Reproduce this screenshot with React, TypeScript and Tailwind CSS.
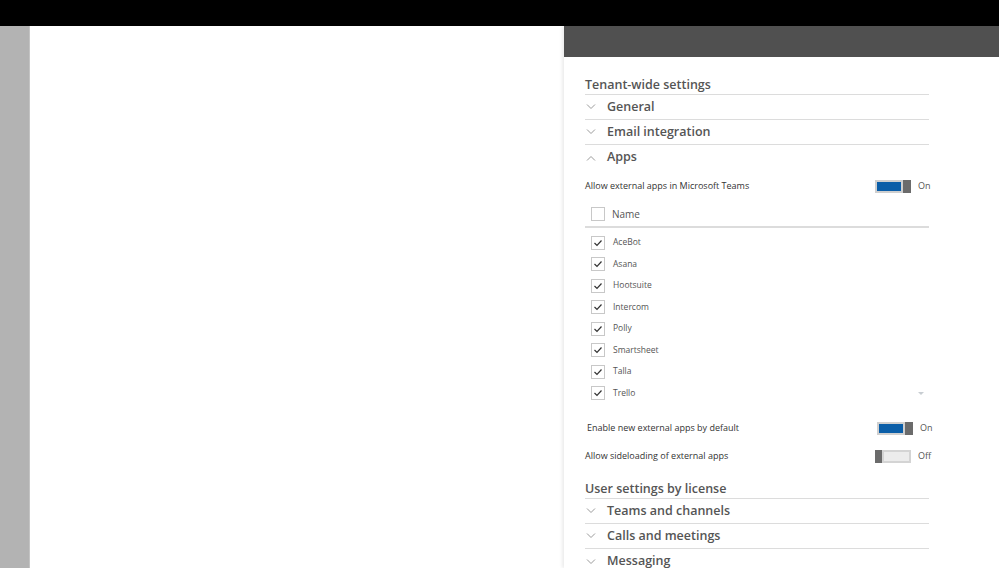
import React from "react";

const font = { fontFamily: '"Open Sans", "Noto Sans", sans-serif' };

function Chevron({ up = false }: { up?: boolean }) {
  return (
    <svg width="10" height="6" viewBox="0 0 10 6" className="shrink-0">
      <path
        d={up ? "M1 5.5 L5 1.5 L9 5.5" : "M1 0.5 L5 4.5 L9 0.5"}
        fill="none"
        stroke="#9a9a9a"
        strokeWidth="1"
      />
    </svg>
  );
}

function Section({ label, up = false, last = false }: { label: string; up?: boolean; last?: boolean }) {
  return (
    <div className={`flex items-center h-[25px] gap-[11px] pl-[1px] ${last ? "" : "border-b border-[#dcdcdc]"}`}>
      <Chevron up={up} />
      <span className="text-[12.5px] font-semibold text-[#555555] leading-none">{label}</span>
    </div>
  );
}

function Toggle({ on }: { on: boolean }) {
  if (on) {
    return (
      <div className="flex items-center gap-[7px]">
        <div className="flex items-center h-[13px]">
          <div className="w-[28px] h-[13px] border-2 border-[#cfcfcf] bg-[#0b5ea8]" />
          <div className="w-[8px] h-[13px] bg-[#6b6b6b]" />
        </div>
        <span className="text-[9px] text-[#555555] w-[11px]">On</span>
      </div>
    );
  }
  return (
    <div className="flex items-center gap-[7px]">
      <div className="flex items-center h-[13px]">
        <div className="w-[7px] h-[13px] bg-[#6b6b6b]" />
        <div className="w-[29px] h-[13px] border-2 border-[#d4d4d4] bg-[#ececec]" />
      </div>
      <span className="text-[9px] text-[#555555] w-[11px]">Off</span>
    </div>
  );
}

function Check({ checked }: { checked: boolean }) {
  return (
    <div className="w-[14px] h-[14px] border border-[#c8c8c8] bg-white flex items-center justify-center shrink-0">
      {checked && (
        <svg width="10" height="8" viewBox="0 0 10 8">
          <path d="M1.5 4 L4 6.5 L8.5 1.5" fill="none" stroke="#333333" strokeWidth="1.2" />
        </svg>
      )}
    </div>
  );
}

const apps = ["AceBot", "Asana", "Hootsuite", "Intercom", "Polly", "Smartsheet", "Talla", "Trello"];

export default function App() {
  return (
    <div className="w-[999px] h-[568px] overflow-hidden flex flex-col bg-white" style={font}>
      <div className="h-[26px] bg-black shrink-0" />
      <div className="flex flex-1 min-h-0">
        <div className="w-[30px] bg-[#b3b3b3] border-r border-[#c4c4c4]" />
        <div className="flex-1 bg-white" />
        <div className="w-[435px] flex flex-col shadow-[-2px_0_3px_rgba(0,0,0,0.08)]">
          <div className="h-[31px] bg-[#505050] shrink-0" />
          <div className="w-[344px] ml-[21px] pt-[20px]">
            <div className="h-[18px] flex items-center border-b border-[#dcdcdc]">
              <span className="text-[12.5px] font-semibold text-[#555555] leading-none">Tenant-wide settings</span>
            </div>
            <Section label="General" />
            <Section label="Email integration" />
            <Section label="Apps" up last />

            <div className="mt-[7px] h-[18px] flex items-center justify-between">
              <span className="text-[9px] text-[#333333]">Allow external apps in Microsoft Teams</span>
              <Toggle on />
            </div>

            <div className="mt-[12px] h-[21px] flex items-start gap-[7px] pl-[6px] border-b-2 border-[#dcdcdc]">
              <div className="w-[14px] h-[14px] border border-[#c8c8c8]" />
              <span className="text-[10px] text-[#555555] leading-[14px]">Name</span>
            </div>

            <div className="mt-[4px]">
              {apps.map((a, i) => (
                <div key={a} className="h-[21.5px] flex items-center gap-[8px] pl-[6px] relative">
                  <Check checked />
                  <span className="text-[8.5px] text-[#555555]">{a}</span>
                  {i === apps.length - 1 && (
                    <span className="absolute right-[5px] top-[9px] w-0 h-0 border-l-[3px] border-r-[3px] border-t-[3px] border-l-transparent border-r-transparent border-t-[#c8cdd2]" />
                  )}
                </div>
              ))}
            </div>

            <div className="mt-[15px] h-[18px] flex items-center justify-between pl-[2px]">
              <span className="text-[9px] text-[#333333]">Enable new external apps by default</span>
              <div className="mr-[-2px]">
                <Toggle on />
              </div>
            </div>
            <div className="mt-[10px] h-[18px] flex items-center justify-between">
              <span className="text-[9px] text-[#333333]">Allow sideloading of external apps</span>
              <Toggle on={false} />
            </div>

            <div className="mt-[16px] h-[18px] flex items-center border-b border-[#dcdcdc]">
              <span className="text-[12.5px] font-semibold text-[#555555] leading-none">User settings by license</span>
            </div>
            <Section label="Teams and channels" />
            <Section label="Calls and meetings" />
            <Section label="Messaging" last />
          </div>
        </div>
      </div>
    </div>
  );
}
